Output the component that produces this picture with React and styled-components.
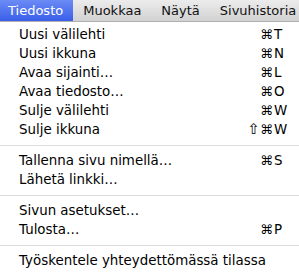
import React from 'react';
import styled, { createGlobalStyle } from 'styled-components';

const Global = createGlobalStyle`
  html, body {
    margin: 0;
    padding: 0;
    background: #fafafa;
  }
  body {
    width: 299px;
    height: 273px;
    overflow: hidden;
    font-family: "DejaVu Sans", "Lucida Grande", sans-serif;
  }
`;

const Frame = styled.div`
  width: 299px;
  height: 273px;
  display: flex;
  flex-direction: column;
  background: #f9f9f9;
`;

const MenuBar = styled.div`
  height: 22px;
  display: flex;
  align-items: stretch;
  background: linear-gradient(#ececec, #d2d2d2);
  border-bottom: 1px solid #b0b0b0;
  box-sizing: border-box;
  white-space: nowrap;
  overflow: hidden;
`;

const BarItem = styled.div`
  display: flex;
  align-items: center;
  padding-left: ${(p) => (p.$active ? '8px' : '10px')};
  padding-right: 10px;
  font-size: 13px;
  color: ${(p) => (p.$active ? '#fff' : '#111')};
  background: ${(p) =>
    p.$active ? 'linear-gradient(#6b8bf5, #3a5ee9)' : 'transparent'};
`;

const Menu = styled.div`
  flex: 1;
  padding-top: 3px;
  display: flex;
  flex-direction: column;
  background: rgba(255, 255, 255, 0.96);
`;

const Item = styled.div`
  height: 19px;
  display: grid;
  grid-template-columns: 1fr 30px 26px;
  align-items: center;
  padding-left: 19px;
  font-size: 13.4px;
  color: #000;
  white-space: nowrap;
`;

const Mods = styled.span`
  text-align: right;
  font-size: 13px;
`;

const Shift = styled.span`
  font-size: 15px;
  line-height: 1;
`;

const Key = styled.span`
  text-align: left;
  padding-left: 1px;
  font-size: 13.4px;
`;

const Separator = styled.div`
  height: 12px;
  display: flex;
  align-items: center;

  &::after {
    content: '';
    flex: 1;
    height: 1px;
    background: #dcdcdc;
  }
`;

const groups = [
  [
    ['Uusi välilehti', false, 'T'],
    ['Uusi ikkuna', false, 'N'],
    ['Avaa sijainti…', false, 'L'],
    ['Avaa tiedosto…', false, 'O'],
    ['Sulje välilehti', false, 'W'],
    ['Sulje ikkuna', true, 'W'],
  ],
  [
    ['Tallenna sivu nimellä…', false, 'S'],
    ['Lähetä linkki…'],
  ],
  [
    ['Sivun asetukset…'],
    ['Tulosta…', false, 'P'],
  ],
  [['Työskentele yhteydettömässä tilassa']],
];

const App = () => {
  return (
    <Frame>
      <Global />
      <MenuBar>
        <BarItem $active>Tiedosto</BarItem>
        <BarItem>Muokkaa</BarItem>
        <BarItem>Näytä</BarItem>
        <BarItem>Sivuhistoria</BarItem>
      </MenuBar>
      <Menu>
        {groups.map((group, gi) => (
          <React.Fragment key={gi}>
            {gi > 0 && <Separator />}
            {group.map(([label, shift, key]) => (
              <Item key={label}>
                <span>{label}</span>
                <Mods>
                  {shift && <Shift>⇧</Shift>}
                  {key && '⌘'}
                </Mods>
                <Key>{key}</Key>
              </Item>
            ))}
          </React.Fragment>
        ))}
      </Menu>
    </Frame>
  );
};

export default App;
